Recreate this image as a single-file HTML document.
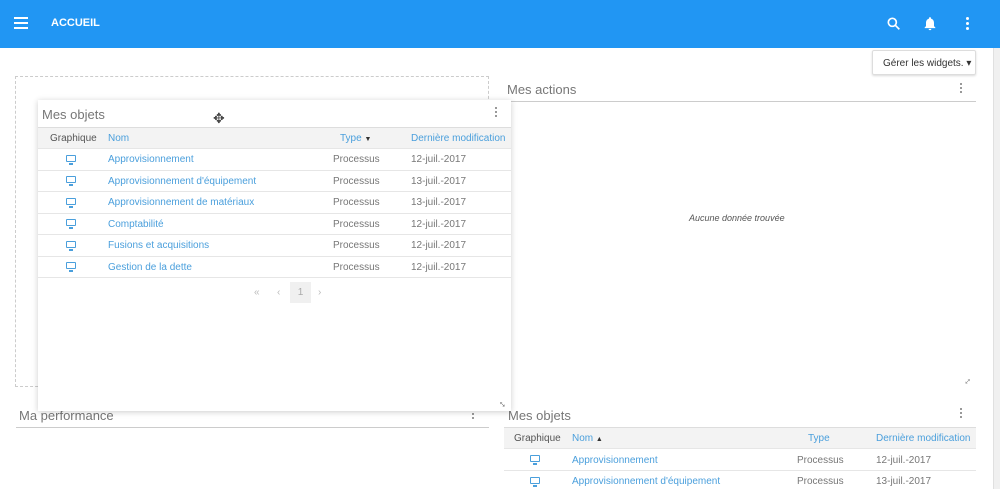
<!DOCTYPE html>
<html><head><meta charset="utf-8"><style>
*{margin:0;padding:0;box-sizing:border-box}
body{width:1000px;height:489px;overflow:hidden;background:#fff;font-family:"Liberation Sans",sans-serif;position:relative;color:#666}
.a{position:absolute;white-space:nowrap}
.top{left:0;top:0;width:1000px;height:48px;background:#2196f3}
.t{font-size:10px}
.bl{color:#4a9fdc}
.gr{color:#777}
.ttl{font-size:13px;color:#777}
.hdr{background:#f3f3f3;border-top:1px solid #ddd;border-bottom:1px solid #e6e6e6}
.ln{height:1px;background:#e6e6e6}
.mon{width:10px;height:7px;border:1.5px solid #4a9fdc;border-radius:1px}
.mon:after{content:"";position:absolute;left:2px;top:7px;width:4px;height:1.5px;background:#4a9fdc}
.dots{width:2px;height:2px;background:#999;box-shadow:0 4px #999,0 8px #999}
</style></head><body>
<div class="a top"></div>
<div class="a" style="left:14px;top:17px;width:14px;height:2px;background:#fff;box-shadow:0 5px #fff,0 10px #fff"></div>
<div class="a" style="left:51px;top:17px;color:#fff;font-weight:bold;font-size:11px">ACCUEIL</div>
<svg class="a" style="left:886px;top:16px" width="16" height="16" viewBox="0 0 24 24"><circle cx="9.5" cy="9.5" r="6" stroke="#fff" stroke-width="2.5" fill="none"/><path d="M14 14l6 6" stroke="#fff" stroke-width="2.5"/></svg>
<svg class="a" style="left:922px;top:15px" width="16" height="17" viewBox="0 0 24 24"><path d="M12 22a2 2 0 0 0 2-2h-4a2 2 0 0 0 2 2zm6-6v-5c0-3-1.6-5.6-4.5-6.3V4a1.5 1.5 0 0 0-3 0v.7C7.6 5.4 6 8 6 11v5l-2 2v1h16v-1z" fill="#fff"/></svg>
<div class="a" style="left:966px;top:17px;width:3px;height:3px;background:#fff;border-radius:2px;box-shadow:0 5px #fff,0 10px #fff"></div>
<div class="a" style="left:993px;top:48px;width:7px;height:441px;background:#f0f0f0;border-left:1px solid #e0e0e0"></div>
<div class="a" style="left:872px;top:50px;width:104px;height:25px;border:1px solid #ddd;border-radius:2px;box-shadow:0 1px 2px rgba(0,0,0,.15);font-size:10px;color:#333;padding:7px 0 0 10px">Gérer les widgets. ▾</div>

<!-- placeholder -->
<div class="a" style="left:15px;top:76px;width:474px;height:311px;border:1px dashed #ccc"></div>

<!-- Mes actions -->
<div class="a ttl" style="left:507px;top:82px">Mes actions</div>
<div class="a dots" style="left:960px;top:83px"></div>
<div class="a" style="left:503px;top:101px;width:473px;height:1px;background:#ccc"></div>
<div class="a t" style="left:689px;top:213px;font-style:italic;color:#555;font-size:9px">Aucune donnée trouvée</div>
<div class="a" style="left:965px;top:376px;font-size:10px;color:#777;transform:rotate(45deg)">↕</div>

<!-- Ma performance -->
<div class="a ttl" style="left:19px;top:408px">Ma performance</div>
<div class="a dots" style="left:472px;top:409px"></div>
<div class="a" style="left:16px;top:427px;width:473px;height:1px;background:#ccc"></div>

<!-- Mes objets bottom right -->
<div class="a ttl" style="left:508px;top:408px">Mes objets</div>
<div class="a dots" style="left:960px;top:408px"></div>
<div class="a hdr" style="left:504px;top:427px;width:472px;height:22px"></div>
<div class="a t" style="left:514px;top:433px;color:#555">Graphique</div>
<div class="a t bl" style="left:572px;top:433px">Nom <span style="color:#333;font-size:7px">▲</span></div>
<div class="a t bl" style="left:808px;top:433px">Type</div>
<div class="a t bl" style="left:876px;top:433px">Dernière modification</div>
<div class="a mon" style="left:530px;top:455px"></div>
<div class="a t bl" style="left:572px;top:455px">Approvisionnement</div>
<div class="a t gr" style="left:797px;top:455px">Processus</div>
<div class="a t gr" style="left:876px;top:455px">12-juil.-2017</div>
<div class="a ln" style="left:504px;top:470px;width:472px"></div>
<div class="a mon" style="left:530px;top:477px"></div>
<div class="a t bl" style="left:572px;top:476px">Approvisionnement d'équipement</div>
<div class="a t gr" style="left:797px;top:476px">Processus</div>
<div class="a t gr" style="left:876px;top:476px">13-juil.-2017</div>

<!-- dragged card -->
<div class="a" style="left:38px;top:100px;width:473px;height:311px;background:#fff;box-shadow:0 1px 6px rgba(0,0,0,.2)"></div>
<div class="a ttl" style="left:42px;top:107px">Mes objets</div>
<div class="a" style="left:213px;top:110px;font-size:14px;color:#444">✥</div>
<div class="a dots" style="left:495px;top:107px"></div>
<div class="a hdr" style="left:38px;top:127px;width:473px;height:22px"></div>
<div class="a t" style="left:50px;top:133px;color:#555">Graphique</div>
<div class="a t bl" style="left:108px;top:133px">Nom</div>
<div class="a t bl" style="left:340px;top:133px">Type <span style="color:#333;font-size:7px">▼</span></div>
<div class="a t bl" style="left:411px;top:133px">Dernière modification</div>

<div class="a mon" style="left:66px;top:155px"></div><div class="a t bl" style="left:108px;top:154px">Approvisionnement</div><div class="a t gr" style="left:333px;top:154px">Processus</div><div class="a t gr" style="left:411px;top:154px">12-juil.-2017</div>
<div class="a ln" style="left:38px;top:170px;width:473px"></div>
<div class="a mon" style="left:66px;top:176px"></div><div class="a t bl" style="left:108px;top:176px">Approvisionnement d'équipement</div><div class="a t gr" style="left:333px;top:176px">Processus</div><div class="a t gr" style="left:411px;top:176px">13-juil.-2017</div>
<div class="a ln" style="left:38px;top:191px;width:473px"></div>
<div class="a mon" style="left:66px;top:198px"></div><div class="a t bl" style="left:108px;top:197px">Approvisionnement de matériaux</div><div class="a t gr" style="left:333px;top:197px">Processus</div><div class="a t gr" style="left:411px;top:197px">13-juil.-2017</div>
<div class="a ln" style="left:38px;top:213px;width:473px"></div>
<div class="a mon" style="left:66px;top:219px"></div><div class="a t bl" style="left:108px;top:219px">Comptabilité</div><div class="a t gr" style="left:333px;top:219px">Processus</div><div class="a t gr" style="left:411px;top:219px">12-juil.-2017</div>
<div class="a ln" style="left:38px;top:234px;width:473px"></div>
<div class="a mon" style="left:66px;top:241px"></div><div class="a t bl" style="left:108px;top:240px">Fusions et acquisitions</div><div class="a t gr" style="left:333px;top:240px">Processus</div><div class="a t gr" style="left:411px;top:240px">12-juil.-2017</div>
<div class="a ln" style="left:38px;top:256px;width:473px"></div>
<div class="a mon" style="left:66px;top:262px"></div><div class="a t bl" style="left:108px;top:262px">Gestion de la dette</div><div class="a t gr" style="left:333px;top:262px">Processus</div><div class="a t gr" style="left:411px;top:262px">12-juil.-2017</div>
<div class="a ln" style="left:38px;top:277px;width:473px"></div>
<div class="a t" style="left:254px;top:287px;color:#bbb">«</div>
<div class="a t" style="left:277px;top:287px;color:#bbb">‹</div>
<div class="a t" style="left:290px;top:282px;width:21px;height:21px;background:#f0f0f0;color:#aaa;text-align:center;padding-top:5px">1</div>
<div class="a t" style="left:318px;top:287px;color:#bbb">›</div>
<div class="a" style="left:500px;top:399px;font-size:10px;color:#555;transform:rotate(-45deg)">↕</div>
</body></html>
